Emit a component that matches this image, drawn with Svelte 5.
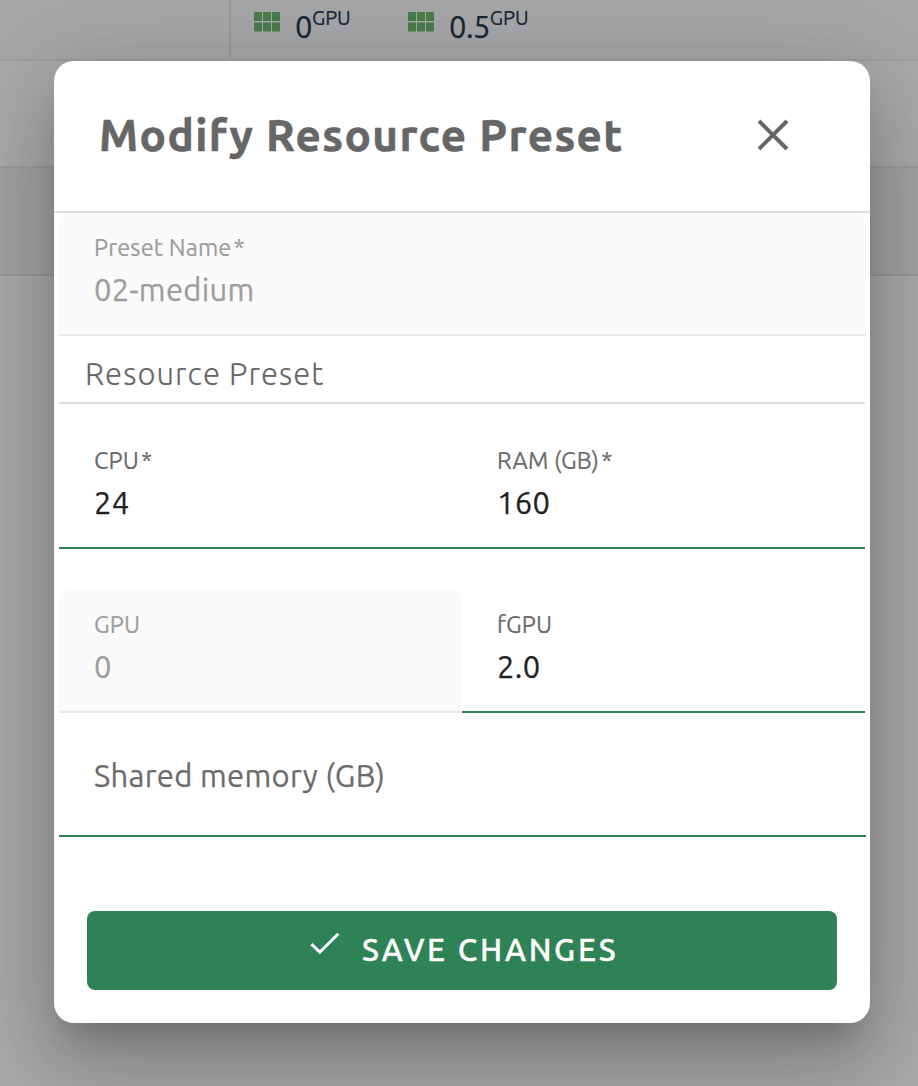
<script>
  const gpus = [
    { amount: '0', width: 154 },
    { amount: '0.5', width: 160 }
  ];
</script>

{#snippet field(label, value, cls, star)}
  <label class="field {cls}">
    <span class="label"><span>{label}</span>{#if star}<i>*</i>{/if}</span>
    <span class="value">{value}</span>
  </label>
{/snippet}

<div class="page">
  <div class="row top">
    <div class="side"></div>
    <div class="gpus">
      {#each gpus as g}
        <div class="gpu-item" style="width:{g.width}px">
          <svg width="26" height="20" viewBox="0 0 26 20">
            <path d="M0 0h8v9H0zM9 0h8v9H9zM18 0h8v9h-8zM0 10.5h8v9H0zM9 10.5h8v9H9zM18 10.5h8v9h-8z" fill="#6cb76e" />
          </svg>
          <span class="amount">{g.amount}</span><span class="unit">GPU</span>
        </div>
      {/each}
    </div>
  </div>
  <div class="row plain"></div>
  <div class="row selected"></div>
</div>

<div class="scrim">
  <div class="dialog">
    <header>
      <h1>Modify Resource Preset</h1>
      <svg class="close" width="32" height="32" viewBox="0 0 32 32">
        <path d="M2 2L30 30M30 2L2 30" stroke="#666" stroke-width="4" fill="none" />
      </svg>
    </header>
    <div class="body">
      {@render field('Preset Name', '02-medium', 'name disabled', true)}
      <h2><span>Resource Preset</span></h2>
      <div class="pair first">
        {@render field('CPU', '24', 'cpu', true)}
        {@render field('RAM (GB)', '160', 'ram', true)}
      </div>
      <div class="pair second">
        {@render field('GPU', '0', 'gpu disabled', false)}
        {@render field('fGPU', '2.0', 'fgpu', false)}
      </div>
      <label class="field memory"><span>Shared memory (GB)</span></label>
    </div>
    <footer>
      <button>
        <svg width="30" height="24" viewBox="0 0 30 24">
          <path d="M1.5 12.2L9.8 20.2L28.3 1.7" stroke="#fff" stroke-width="3" fill="none" />
        </svg>
        <span>SAVE CHANGES</span>
      </button>
    </footer>
  </div>
</div>

<style>
  :global(body) { margin: 0; overflow: hidden; background: #f7f7f7; }
  .page, .scrim, .page *, .scrim * { box-sizing: border-box; }
  .page, .scrim { font-family: Ubuntu, "Noto Sans", sans-serif; width: 918px; height: 1086px; }
  .page { background: #f9f9f9; overflow: hidden; }
  .row { display: flex; border-bottom: 2px solid #e8e9ed; }
  .top { height: 61px; background: #f4f5f8; }
  .side { width: 231px; height: 58px; border-right: 2px solid #dfe2e8; }
  .gpus { display: flex; padding-left: 23px; }
  .gpu-item { display: flex; align-items: flex-start; color: #26374a; white-space: nowrap; }
  .gpu-item svg { margin-top: 12px; }
  .amount { margin-left: 15px; font-size: 31px; line-height: 42px; margin-top: 6px; letter-spacing: -0.6px; -webkit-text-stroke: 0.25px currentColor; }
  .unit { font-size: 20px; line-height: 26px; margin-top: 5px; letter-spacing: 0; -webkit-text-stroke: 0.2px currentColor; }
  .plain { height: 107px; background: #fafafa; border-color: #e3e5e8; }
  .selected { height: 108px; background: #eceff1; border-color: #e1e1e7; }
  .scrim { position: absolute; inset: 0; overflow: hidden; background: rgba(0, 0, 0, 0.32); padding: 61px 48px 0 54px; }
  .dialog {
    width: 816px; height: 962px; background: #fff; border-radius: 20px; display: flex; flex-direction: column;
    box-shadow: 0 22px 30px -14px rgba(0, 0, 0, 0.2), 0 48px 76px 6px rgba(0, 0, 0, 0.14), 0 18px 92px 16px rgba(0, 0, 0, 0.12);
  }
  header { display: flex; align-items: center; justify-content: space-between; height: 152px; padding: 0 81px 2px 45px; border-bottom: 2px solid #ddd; }
  h1 { margin: 0; font-size: 44px; line-height: 60px; font-weight: 700; color: #666; letter-spacing: 1.4px; white-space: nowrap; -webkit-text-stroke: 0.6px currentColor; }
  .body { padding: 0 5px; width: 817px; }
  .field { display: flex; flex-direction: column; height: 123px; flex: 1; padding: 18px 0 0 35px; border-bottom: 2px solid #2f8255; white-space: nowrap; }
  .disabled { background: #fafafa; border-bottom-color: #eaeaea; border-radius: 10px 10px 0 0; }
  .label { display: flex; font-size: 23.5px; line-height: 32px; color: #6b6b6b; letter-spacing: 0.15px; -webkit-text-stroke: 0.2px currentColor; }
  .label i { font-style: normal; margin-left: 2px; }
  .value { font-size: 31px; line-height: 42px; margin-top: 6px; color: #212121; letter-spacing: 0.3px; -webkit-text-stroke: 0.25px currentColor; }
  .disabled .label, .disabled .value { color: #9d9d9d; }
  h2 { margin: 0; width: 806px; height: 68px; padding: 16px 0 0 26px; border-bottom: 2px solid #ddd; font-size: 31px; line-height: 43px; font-weight: 300; color: #666; letter-spacing: 1.07px; -webkit-text-stroke: 0.15px currentColor; }
  .pair { display: flex; width: 806px; }
  .first { padding-top: 22px; }
  .second { padding-top: 41px; }
  .memory { padding-top: 41px; margin-top: 1px; font-size: 31px; line-height: 42px; color: #6b6b6b; letter-spacing: 0.3px; -webkit-text-stroke: 0.25px currentColor; }
  footer { padding: 74px 33px 0; }
  button { display: flex; align-items: flex-start; width: 750px; height: 79px; border: 0; padding: 0 0 0 223px; border-radius: 8px; background: #2f8255; color: #fff; font: 500 31.2px/42px Ubuntu, "Noto Sans", sans-serif; letter-spacing: 2.75px; white-space: nowrap; -webkit-text-stroke: 0.35px currentColor; }
  button svg { margin-top: 21px; }
  button span { margin: 18px 0 0 22px; }
</style>
